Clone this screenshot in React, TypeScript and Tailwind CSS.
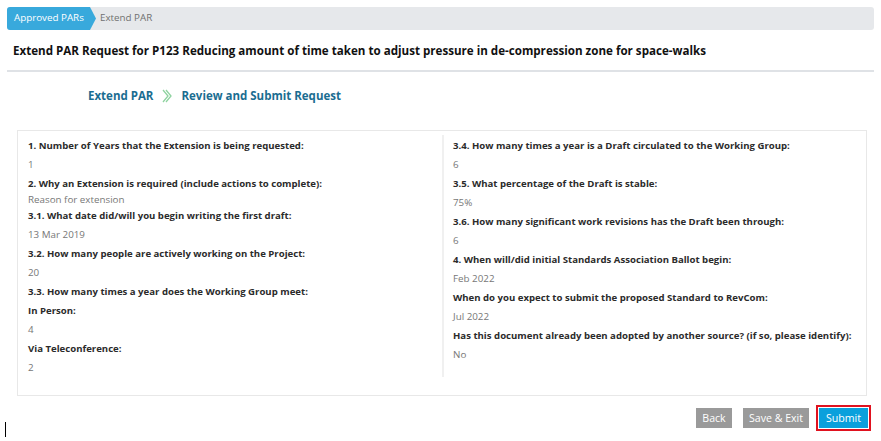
export default function App() {
  const left: { label: string; value?: string; tight?: boolean }[] = [
    { label: "1. Number of Years that the Extension is being requested:", value: "1" },
    { label: "2. Why an Extension is required (include actions to complete):", value: "Reason for extension", tight: true },
    { label: "3.1. What date did/will you begin writing the first draft:", value: "13 Mar 2019" },
    { label: "3.2. How many people are actively working on the Project:", value: "20" },
    { label: "3.3. How many times a year does the Working Group meet:" },
    { label: "In Person:", value: "4" },
    { label: "Via Teleconference:", value: "2" },
  ];
  const right: { label: string; value?: string; tight?: boolean }[] = [
    { label: "3.4. How many times a year is a Draft circulated to the Working Group:", value: "6" },
    { label: "3.5. What percentage of the Draft is stable:", value: "75%" },
    { label: "3.6. How many significant work revisions has the Draft been through:", value: "6" },
    { label: "4. When will/did initial Standards Association Ballot begin:", value: "Feb 2022" },
    { label: "When do you expect to submit the proposed Standard to RevCom:", value: "Jul 2022" },
    { label: "Has this document already been adopted by another source? (if so, please identify):", value: "No" },
  ];

  const renderItems = (items: typeof left) =>
    items.map((it) => (
      <div key={it.label}>
        <div className="h-[19px] whitespace-nowrap text-[9.6px] font-bold leading-[19px] text-[#2b2b2b]">{it.label}</div>
        {it.value && (
          <div
            className={
              it.tight
                ? "h-[13px] text-[9.8px] leading-[13px] text-[#777]"
                : "h-[19px] text-[9.8px] leading-[19px] text-[#777]"
            }
          >
            {it.value}
          </div>
        )}
      </div>
    ));

  return (
    <div className="relative h-[441px] w-[881px] bg-white font-['Open_Sans',sans-serif]">
      <div className="px-[7px] pt-[7px]">
        {/* Breadcrumb */}
        <div className="flex h-[23px] items-center rounded-[3px] bg-[#e6e8eb]">
          <div className="relative flex h-full w-[83px] shrink-0 items-center whitespace-nowrap rounded-l-[3px] bg-[#38a9dc] pl-[7px] text-[9.8px] text-white">
            Approved PARs
            <svg className="absolute left-[83px] top-0" width="6" height="23" viewBox="0 0 6 23">
              <polygon points="0,0 6,11.5 0,23" fill="#38a9dc" />
            </svg>
          </div>
          <span className="ml-[10px] text-[9.8px] text-[#707070]">Extend PAR</span>
        </div>

        {/* Title */}
        <h1 className="mt-[12px] h-[28px] whitespace-nowrap pl-[6px] text-[11.6px] font-bold leading-[18px] text-[#111]">
          Extend PAR Request for P123 Reducing amount of time taken to adjust pressure in de-compression zone for space-walks
        </h1>
        <div className="h-[2px] bg-[#dfe2e6]" />
      </div>

      {/* Steps */}
      <div className="mt-[15px] flex h-[18px] items-center pl-[88px] text-[11.5px] font-bold leading-[18px] text-[#1b6d91]">
        <span>Extend PAR</span>
        <svg className="mx-[9px]" width="10" height="14" viewBox="0 0 10 14" fill="none" stroke="#8fd3a0" strokeWidth="1.3">
          <polyline points="1,1 6,7 1,13" />
          <polyline points="4,1 9,7 4,13" />
        </svg>
        <span>Review and Submit Request</span>
      </div>

      {/* Card */}
      <div className="mx-[17px] mt-[25px] flex h-[266px] w-[850px] border border-[#e8e8e8] pt-[4px] pb-[18px]">
        <div className="w-[424px] shrink-0 pl-[10px] pt-[1px]">{renderItems(left)}</div>
        <div className="shrink-0 border-l-2 border-[#f0f0f0] pl-[9px] pt-[1px]">{renderItems(right)}</div>
      </div>

      {/* Buttons */}
      <div className="mt-[9px] flex items-center justify-end pr-[10px]">
        <button className="h-[20px] w-[36px] bg-[#9a9a9a] text-[10.6px] leading-[20px] text-white">Back</button>
        <button className="ml-[11px] h-[20px] w-[66px] bg-[#9a9a9a] text-[10.6px] leading-[20px] text-white">Save &amp; Exit</button>
        <div className="ml-[7px] border-2 border-[#e0121f] p-[1px]">
          <button className="block h-[20px] w-[49px] bg-[#0aa0dc] text-[10.6px] leading-[20px] text-white">Submit</button>
        </div>
      </div>

      {/* Text caret */}
      <div className="absolute left-[5px] top-[422px] h-[15px] w-[1px] bg-black" />
    </div>
  );
}
